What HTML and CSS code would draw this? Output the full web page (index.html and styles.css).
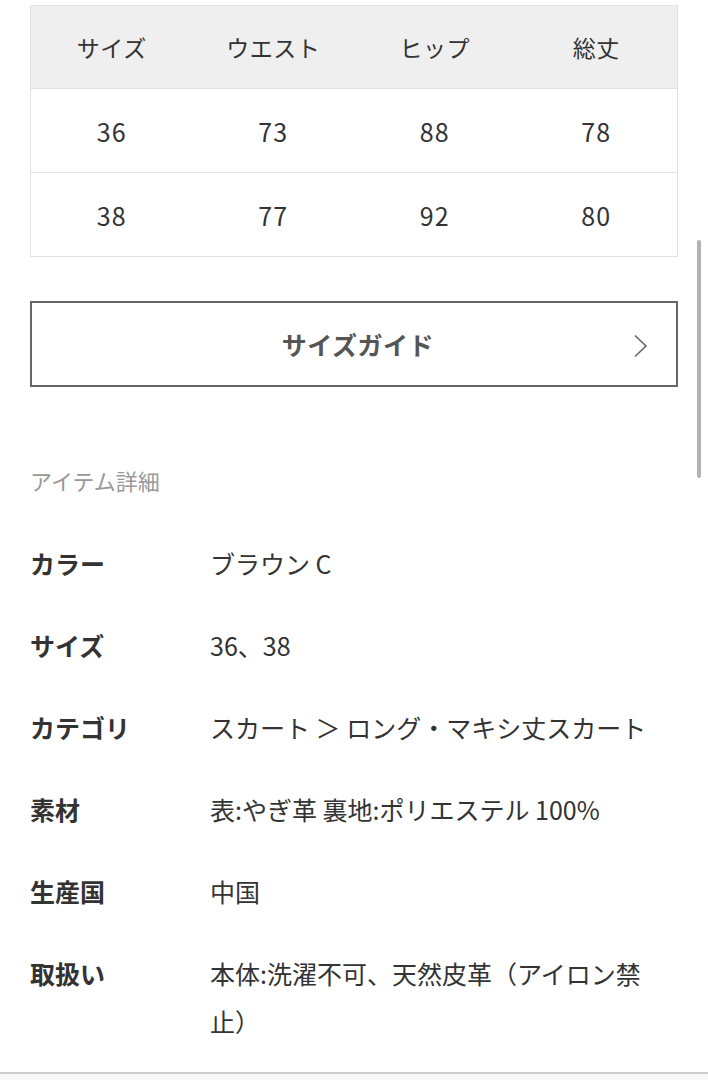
FILE: index.html
```html
<!DOCTYPE html>
<html lang="ja">
<head>
<meta charset="utf-8">
<link rel="stylesheet" href="styles.css">
</head>
<body>
<div class="page">
  <div class="size-table">
    <div class="row head">
      <div class="cell">サイズ</div>
      <div class="cell">ウエスト</div>
      <div class="cell">ヒップ</div>
      <div class="cell">総丈</div>
    </div>
    <div class="row">
      <div class="cell">36</div>
      <div class="cell">73</div>
      <div class="cell">88</div>
      <div class="cell">78</div>
    </div>
    <div class="row">
      <div class="cell">38</div>
      <div class="cell">77</div>
      <div class="cell">92</div>
      <div class="cell">80</div>
    </div>
  </div>

  <a class="guide-btn" href="#">
    <span class="guide-label">サイズガイド</span>
    <svg class="chev" width="15" height="24" viewBox="0 0 15 24"><path d="M2 1.5 L13 12 L2 22.5" fill="none" stroke="#666" stroke-width="1.6"/></svg>
  </a>

  <h2 class="section-title">アイテム詳細</h2>

  <dl class="details">
    <div class="d-row"><dt>カラー</dt><dd>ブラウン C</dd></div>
    <div class="d-row"><dt>サイズ</dt><dd>36、38</dd></div>
    <div class="d-row"><dt>カテゴリ</dt><dd>スカート ＞ ロング・マキシ丈スカート</dd></div>
    <div class="d-row"><dt>素材</dt><dd>表:やぎ革 裏地:ポリエステル 100%</dd></div>
    <div class="d-row"><dt>生産国</dt><dd>中国</dd></div>
    <div class="d-row"><dt>取扱い</dt><dd>本体:洗濯不可、天然皮革（アイロン禁止）</dd></div>
  </dl>
</div>
<div class="bottom-bar"></div>
<div class="scroll-thumb"></div>
</body>
</html>
```

FILE: styles.css
```css
html, body {
  margin: 0;
  padding: 0;
  background: #fff;
}
body {
  font-family: "Noto Sans CJK JP", "Noto Sans", sans-serif;
  color: #333;
  position: relative;
  min-height: 1080px;
  overflow: hidden;
}
.page {
  padding: 5px 30px 0;
}
.size-table {
  border: 1px solid #e2e2e2;
}
.row {
  display: grid;
  grid-template-columns: repeat(4, 1fr);
  height: 83px;
  align-items: center;
  border-bottom: 1px solid #e2e2e2;
  font-size: 25px;
  letter-spacing: 1px;
}
.row:last-child {
  border-bottom: none;
}
.row.head {
  background: #efefef;
  font-size: 23px;
  letter-spacing: 0.5px;
  height: 82px;
}
.cell {
  text-align: center;
  color: #333;
}
.guide-btn {
  margin-top: 44px;
  height: 86px;
  box-sizing: border-box;
  border: 2px solid #666;
  display: flex;
  align-items: center;
  justify-content: center;
  position: relative;
  text-decoration: none;
}
.guide-label {
  font-size: 25px;
  font-weight: 700;
  color: #555;
  padding-left: 8px;
  letter-spacing: 0.5px;
}
.chev {
  position: absolute;
  right: 28px;
  top: 31px;
}
.section-title {
  margin: 78px 0 27px;
  font-size: 22px;
  font-weight: 400;
  line-height: 30px;
  color: #999;
}
.details {
  margin: 0;
}
.d-row {
  display: grid;
  grid-template-columns: 180px 1fr;
  padding: 17px 0;
  line-height: 48px;
  font-size: 25px;
}
.d-row dt {
  font-weight: 700;
  color: #333;
}
.d-row dd {
  margin: 0;
  color: #333;
}
.bottom-bar {
  margin-top: 10px;
  border-top: 2px solid #cbcbcb;
  height: 10px;
  background: #f7f7f7;
}
.scroll-thumb {
  position: absolute;
  left: 697px;
  top: 240px;
  width: 4px;
  height: 238px;
  border-radius: 2px;
  background: #b3b3b3;
}
```
